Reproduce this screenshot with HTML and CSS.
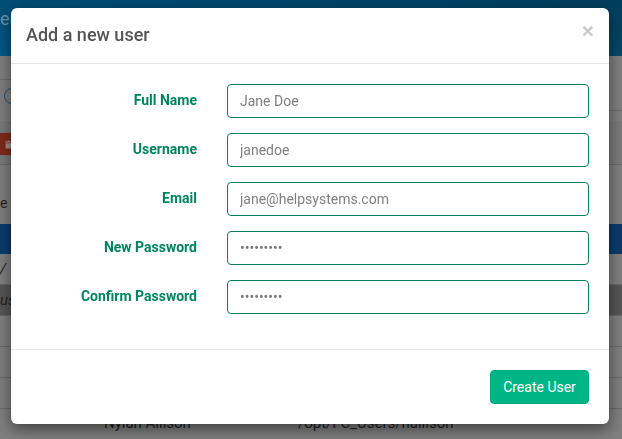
FILE: index.html
```html
<!DOCTYPE html>
<html lang="en">
<head>
  <meta charset="UTF-8" />
  <title>Add a new user</title>
  <link rel="stylesheet" href="styles.css">
</head>
<body>
  <div class="page">
    <div class="topbar">er</div>
    <div class="subbar">
      <div class="crumb"><span class="info-icon"></span></div>
      <div class="stats"></div>
    </div>
    <div class="toolbar">
      <span class="delete-btn">
        <svg class="trash" viewBox="0 0 12 14" width="7" height="11"><path d="M4 0h4v2h4v1.500H0V2h4zM1 5h10v9H1z" fill="#a58d88"/></svg>
      </span>
    </div>
    <div class="row-filter">e</div>
    <div class="table-head"></div>
    <div class="table-row italic">/</div>
    <div class="table-row italic selected">us</div>
    <div class="table-row"></div>
    <div class="table-row"></div>
    <div class="table-row"></div>
    <div class="table-row last">
      <span class="user-name">Nylah Allison</span>
      <span class="user-home">/opt/FC_Users/nallison</span>
    </div>
  </div>

  <div class="modal">
    <div class="modal-header">
      <h4>Add a new user</h4>
      <span class="close">×</span>
    </div>
    <form class="modal-body">
      <div class="field">
        <label>Full Name</label>
        <input type="text" placeholder="Jane Doe">
      </div>
      <div class="field">
        <label>Username</label>
        <input type="text" placeholder="janedoe">
      </div>
      <div class="field">
        <label>Email</label>
        <input type="text" placeholder="jane@helpsystems.com">
      </div>
      <div class="field">
        <label>New Password</label>
        <input type="password" value="password1">
      </div>
      <div class="field">
        <label>Confirm Password</label>
        <input type="password" value="password1">
      </div>
    </form>
    <div class="modal-footer">
      <button class="create-btn" type="button">Create User</button>
    </div>
  </div>
</body>
</html>
```

FILE: styles.css
```css
* {
  box-sizing: border-box;
}

html, body {
  height: 100%;
}

body {
  margin: 0;
  font-family: Roboto, "Liberation Sans", sans-serif;
  font-size: 14px;
  color: #222;
  background: #7f7f7f;
  overflow: hidden;
}

/* the page behind the dialog, colours already dimmed */
.page {
  height: 439px;
  overflow: hidden;
}

.topbar {
  height: 56px;
  padding-top: 7px;
  background: linear-gradient(rgba(0, 0, 0, 0.14), rgba(0, 0, 0, 0)), linear-gradient(90deg, #005a8a, #00486c);
  color: #6f93a8;
  font-size: 18px;
  line-height: 24px;
}

.subbar {
  display: flex;
  justify-content: space-between;
  height: 67px;
  border-bottom: 1px solid #747474;
}

.crumb {
  width: 11px;
  height: 24px;
  border-bottom: 1px solid #6e6e6e;
}

.info-icon {
  display: block;
  width: 16px;
  height: 16px;
  margin: 32px 0 0 4px;
  border: 1px solid #1f4a75;
  border-radius: 50%;
}

.stats {
  width: 13px;
  height: 55px;
  border-bottom: 1px solid #6a6a6a;
}

.toolbar {
  height: 42px;
  padding-top: 10px;
  border-bottom: 1px solid #6a6a6a;
  background: #7a7a7a;
}

.delete-btn {
  display: flex;
  align-items: center;
  width: 30px;
  height: 22px;
  padding-left: 5px;
  background: #7f2a1d;
}

.row-filter {
  height: 59px;
  padding-top: 30px;
}

.table-head {
  height: 30px;
  background: #0b3b6b;
}

.table-row {
  height: 31px;
  padding-top: 6px;
  border-bottom: 1px solid #6a6a6a;
}

.table-row.selected {
  background: #565656;
}

.italic {
  font-style: italic;
  font-size: 15px;
}

.table-row.last {
  display: flex;
  border-bottom: 0;
  padding-top: 5px;
  font-size: 15px;
}

.user-name {
  margin-left: 104px;
  width: 194px;
}

.modal {
  position: fixed;
  top: 8px;
  left: 11px;
  width: 598px;
  background: #fff;
  border-radius: 6px;
  box-shadow: 0 5px 15px rgba(0, 0, 0, 0.5);
}

.modal-header {
  display: flex;
  justify-content: space-between;
  height: 56px;
  padding: 14px 15px;
  border-bottom: 1px solid #e5e5e5;
}

.modal-header h4 {
  margin: 0;
  font-size: 18px;
  font-weight: 500;
  line-height: 25px;
  color: #555;
}

.close {
  font-size: 21px;
  font-weight: 700;
  line-height: 17px;
  color: #c8c8c8;
  font-family: "Liberation Sans", sans-serif;
}

.modal-body {
  display: flex;
  flex-direction: column;
  gap: 15px;
  height: 285px;
  padding: 20px 20px 0 15px;
}

.field {
  display: flex;
  height: 34px;
}

.field label {
  width: 171px;
  margin-right: 30px;
  padding-top: 8px;
  font-weight: 700;
  text-align: right;
  color: #00845f;
}

.field input {
  flex: 1;
  height: 34px;
  padding: 6px 12px;
  border: 1px solid #008060;
  border-radius: 4px;
  font-family: inherit;
  font-size: 14px;
  color: #777;
  outline: none;
}

.field input::placeholder {
  color: #808080;
  opacity: 1;
}

.modal-footer {
  display: flex;
  justify-content: flex-end;
  height: 75px;
  padding: 20px;
  border-top: 1px solid #e5e5e5;
}

.create-btn {
  width: 99px;
  height: 34px;
  border: 1px solid #00ab7f;
  border-radius: 4px;
  background: #00b585;
  color: #fff;
  font-family: inherit;
  font-size: 14px;
}
```
